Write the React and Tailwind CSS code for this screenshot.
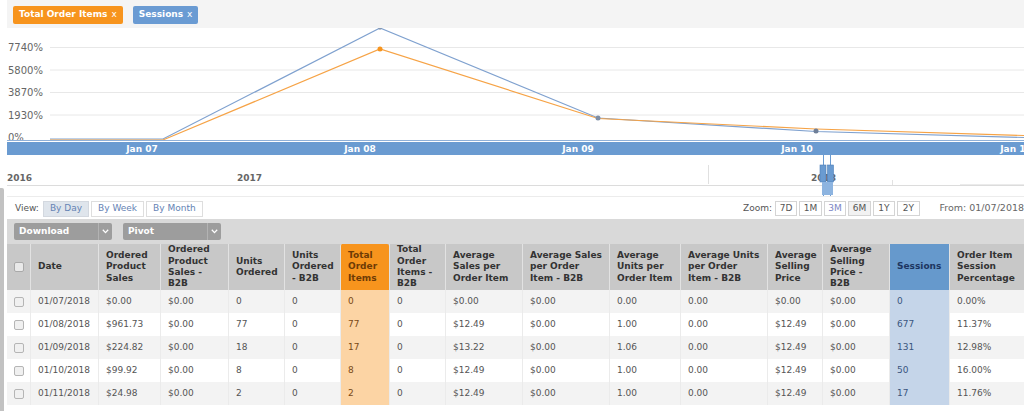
import React from 'react';

// Column widths of the report grid, left to right
const gridCols =
  'grid grid-cols-[23px_68px_62px_68px_56px_56px_49px_56px_77px_87px_71px_87px_55px_67px_60px_75px]';

const headers = [
  'Date',
  'Ordered Product Sales',
  'Ordered Product Sales - B2B',
  'Units Ordered',
  'Units Ordered - B2B',
  'Total Order Items',
  'Total Order Items - B2B',
  'Average Sales per Order Item',
  'Average Sales per Order Item - B2B',
  'Average Units per Order Item',
  'Average Units per Order Item - B2B',
  'Average Selling Price',
  'Average Selling Price - B2B',
  'Sessions',
  'Order Item Session Percentage',
];

const rows = [
  ['01/07/2018', '$0.00', '$0.00', '0', '0', '0', '0', '$0.00', '$0.00', '0.00', '0.00', '$0.00', '$0.00', '0', '0.00%'],
  ['01/08/2018', '$961.73', '$0.00', '77', '0', '77', '0', '$12.49', '$0.00', '1.00', '0.00', '$12.49', '$0.00', '677', '11.37%'],
  ['01/09/2018', '$224.82', '$0.00', '18', '0', '17', '0', '$13.22', '$0.00', '1.06', '0.00', '$12.49', '$0.00', '131', '12.98%'],
  ['01/10/2018', '$99.92', '$0.00', '8', '0', '8', '0', '$12.49', '$0.00', '1.00', '0.00', '$12.49', '$0.00', '50', '16.00%'],
  ['01/11/2018', '$24.98', '$0.00', '2', '0', '2', '0', '$12.49', '$0.00', '1.00', '0.00', '$12.49', '$0.00', '17', '11.76%'],
];

const TOI = 5; // index in headers
const SES = 13;

const Checkbox = ({ head }) => (
  <span
    className={`block w-[10px] h-[10px] rounded-[2px] border ${
      head ? 'border-[#a9a9a9] bg-[#e9e9e9]' : 'border-[#b5b5b5] bg-[#f0f0f0]'
    }`}
  />
);

const Chart = () => {
  const blue = '50,139 163,139 380,28 598,118 816,131.5 1024,137.5';
  const orange = '50,140 163,140 380,49 598,118.5 816,129 1024,135.5';
  return (
    <svg width="1024" height="170" viewBox="0 28 1024 170" className="block">
      {/* grid */}
      {[47.5, 70, 92.5, 115].map((y) => (
        <line key={y} x1="50" x2="1024" y1={y} y2={y} stroke="#e8e8e8" strokeWidth="1" />
      ))}
      {[
        ['7740%', 51],
        ['5800%', 74],
        ['3870%', 96],
        ['1930%', 119],
        ['0%', 141],
      ].map(([t, y]) => (
        <text key={t} x="8" y={y} fontSize="10" fill="#666" fontFamily="DejaVu Sans, sans-serif">
          {t}
        </text>
      ))}

      {/* series */}
      <polyline points={blue} fill="none" stroke="#7fa1cf" strokeWidth="1.2" />
      <polyline points={orange} fill="none" stroke="#f6a346" strokeWidth="1.2" />
      <circle cx="380" cy="28" r="1.8" fill="#8798b0" />
      <circle cx="380" cy="49" r="2.5" fill="#f7941d" />
      <circle cx="598" cy="118" r="2.5" fill="#7e8ea6" />
      <circle cx="816" cy="131" r="2.5" fill="#6f7f98" />

      {/* x axis band */}
      <line x1="7" x2="1024" y1="140.5" y2="140.5" stroke="#8fb0d8" strokeWidth="1" />
      <rect x="7" y="142" width="1017" height="13" fill="#6a9bd1" />
      {[
        ['Jan 07', 142],
        ['Jan 08', 360],
        ['Jan 09', 578],
        ['Jan 10', 797],
        ['Jan 11', 1016],
      ].map(([t, x]) => (
        <text
          key={t}
          x={x}
          y="152"
          textAnchor="middle"
          fontSize="9"
          fontWeight="bold"
          fill="#fff"
          fontFamily="DejaVu Sans, sans-serif"
        >
          {t}
        </text>
      ))}

      {/* navigator */}
      <line x1="7" x2="1024" y1="185.5" y2="185.5" stroke="#dcdcdc" />
      <line x1="7" x2="1024" y1="196.5" y2="196.5" stroke="#ececec" />
      <line x1="708.5" x2="708.5" y1="165" y2="184" stroke="#e0e0e0" />
      <line x1="892.5" x2="892.5" y1="180" y2="185" stroke="#e2e2e2" />
      <line x1="960" x2="1024" y1="184.5" y2="184.5" stroke="#ebebeb" />
      {[
        ['2016', 7],
        ['2017', 237],
        ['2018', 811],
      ].map(([t, x]) => (
        <text key={t} x={x} y="181" fontSize="9" fontWeight="bold" fill="#666" fontFamily="DejaVu Sans, sans-serif">
          {t}
        </text>
      ))}
      <line x1="823.5" x2="823.5" y1="154" y2="196" stroke="#6a9bd1" />
      <line x1="830.5" x2="830.5" y1="154" y2="196" stroke="#6a9bd1" />
      <rect x="820" y="165" width="6" height="17" fill="#6a9bd1" stroke="#4d7fb8" strokeWidth="0.6" />
      <rect x="827.5" y="165" width="6" height="17" fill="#6a9bd1" stroke="#4d7fb8" strokeWidth="0.6" />
      <rect x="822" y="182" width="11" height="13" fill="#8db4e0" />
    </svg>
  );
};

const SelectBox = ({ label }) => (
  <div className="flex items-center w-[98px] h-[17px] bg-[#9d9d9d] rounded-[2px] text-white font-bold">
    <span className="flex-1 pl-[5px]">{label}</span>
    <span className="w-[14px] h-full flex items-center justify-center border-l border-[#b3b3b3]">
      <svg width="7" height="5" viewBox="0 0 7 5">
        <path d="M0.8 0.8 L3.5 3.6 L6.2 0.8" fill="none" stroke="#fff" strokeWidth="1.3" />
      </svg>
    </span>
  </div>
);

export default function App() {
  return (
    <div className="relative w-[1024px] h-[411px] overflow-hidden bg-white text-[9px] font-['DejaVu_Sans',sans-serif]">
      {/* series tags */}
      <div className="ml-[7px] h-[28px] bg-[#f4f4f4] flex items-start gap-[10px] pl-[6px] pt-[6px]">
        <span className="h-[18px] flex items-center px-[6px] rounded-[2px] bg-[#f7941d] text-white font-bold">
          Total Order Items<span className="font-normal ml-[4px]">x</span>
        </span>
        <span className="h-[18px] flex items-center px-[6px] rounded-[2px] bg-[#6a9bd3] text-white font-bold">
          Sessions<span className="font-normal ml-[4px]">x</span>
        </span>
      </div>

      <Chart />

      {/* side tab edge */}
      <div className="absolute left-0 top-[188px] bottom-0 w-[4px] rounded-tr-[2px] bg-[#c2c2c2]" />

      {/* view / zoom row */}
      <div className="h-[21px] flex items-center pl-[15px] text-[#555]">
        <span className="mr-[4px]">View:</span>
        <div className="flex gap-[2px]">
          <span className="h-[16px] flex items-center px-[6px] border border-[#d3d8df] bg-[#dfe5ec] text-[#6583b4]">By Day</span>
          <span className="h-[16px] flex items-center px-[6px] border border-[#dedede] bg-white text-[#6583b4]">By Week</span>
          <span className="h-[16px] flex items-center px-[6px] border border-[#dedede] bg-white text-[#6583b4]">By Month</span>
        </div>
        <div className="ml-auto w-[281px] flex items-center overflow-hidden whitespace-nowrap">
          <span className="mr-[3px]">Zoom:</span>
          {['7D', '1M', '3M', '6M', '1Y', '2Y'].map((z) => (
            <span
              key={z}
              className={`h-[15px] w-[24px] mr-[2px] flex items-center justify-center border border-[#d4d4d4] ${
                z === '3M' ? 'text-[#7b86c4] bg-white' : z === '6M' ? 'bg-[#f2f2f2]' : 'bg-white'
              }`}
            >
              {z}
            </span>
          ))}
          <span className="ml-[18px] text-[#666] text-[9.5px]">From: 01/07/2018</span>
        </div>
      </div>

      {/* toolbar */}
      <div className="ml-[7px] h-[25px] bg-[#d9d9d9] flex items-center gap-[11px] pl-[7px]">
        <SelectBox label="Download" />
        <SelectBox label="Pivot" />
      </div>

      {/* report table */}
      <div className="ml-[7px] w-[1017px]">
        <div className={`${gridCols} h-[46px] bg-[#c8c8c8]`}>
          <div className="flex items-center justify-center">
            <Checkbox head />
          </div>
          {headers.map((h, i) => (
            <div
              key={h}
              className={`flex items-center pl-[7px] pr-[5px] font-bold leading-[11.3px] border-l border-[#e2e2e2] ${
                i === TOI
                  ? 'bg-[#f7941d] text-[#6e3b05] rounded-t-[2px]'
                  : i === SES
                  ? 'bg-[#6699cc] text-[#1d3661]'
                  : 'text-[#333]'
              }`}
            >
              {h}
            </div>
          ))}
        </div>
        {rows.map((r, ri) => (
          <div key={ri} className={`${gridCols} h-[23px] ${ri % 2 === 0 ? 'bg-[#f3f3f3]' : 'bg-white'}`}>
            <div className="flex items-center justify-center">
              <Checkbox />
            </div>
            {r.map((v, i) => (
              <div
                key={i}
                className={`flex items-center pl-[7px] border-l border-[#ebebeb] ${
                  i === TOI
                    ? 'bg-[#fcd4a4] text-[#7a4a18]'
                    : i === SES
                    ? 'bg-[#c5d5e9] text-[#3a567f]'
                    : 'text-[#555]'
                }`}
              >
                {v}
              </div>
            ))}
          </div>
        ))}
      </div>
    </div>
  );
}
